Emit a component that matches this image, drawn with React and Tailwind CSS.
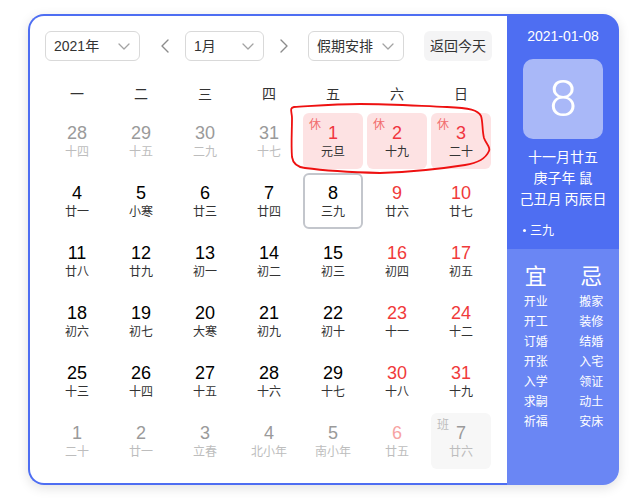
import React from "react";

const FONT = { fontFamily: '"Liberation Sans", Arial, "Noto Sans CJK SC", sans-serif' };

const weeks = ["一", "二", "三", "四", "五", "六", "日"];

// t: o = other month, h = holiday, s = selected, w = work (班)
const days = [
  [28, "十四", "o"], [29, "十五", "o"], [30, "二九", "o"], [31, "十七", "o"], [1, "元旦", "h"], [2, "十九", "h"], [3, "二十", "h"],
  [4, "廿一"], [5, "小寒"], [6, "廿三"], [7, "廿四"], [8, "三九", "s"], [9, "廿六"], [10, "廿七"],
  [11, "廿八"], [12, "廿九"], [13, "初一"], [14, "初二"], [15, "初三"], [16, "初四"], [17, "初五"],
  [18, "初六"], [19, "初七"], [20, "大寒"], [21, "初九"], [22, "初十"], [23, "十一"], [24, "十二"],
  [25, "十三"], [26, "十四"], [27, "十五"], [28, "十六"], [29, "十七"], [30, "十八"], [31, "十九"],
  [1, "二十", "o"], [2, "廿一", "o"], [3, "立春", "o"], [4, "北小年", "o"], [5, "南小年", "o"], [6, "廿五", "o"], [7, "廿六", "w"],
];

const yi = ["开业", "开工", "订婚", "开张", "入学", "求嗣", "祈福"];
const ji = ["搬家", "装修", "结婚", "入宅", "领证", "动土", "安床"];

function Chevron() {
  return (
    <svg width="12" height="7" viewBox="0 0 12 7" fill="none">
      <path d="M1 1l5 5 5-5" stroke="#a3a3a3" strokeWidth="1.3" strokeLinecap="round" strokeLinejoin="round" />
    </svg>
  );
}

function Select({ label, w }) {
  return (
    <div className={`${w} h-[30px] flex items-center justify-between pl-[8px] pr-[9px] border border-[#d9d9d9] rounded-[6px] text-[14px] text-[#333]`}>
      <span>{label}</span>
      <Chevron />
    </div>
  );
}

function Cell({ d, idx }) {
  const [n, lunar, t] = d;
  const col = idx % 7;
  const weekend = col >= 5;
  let box = "";
  let numC = "text-black";
  let lunC = "text-[#333]";
  let tag = null;
  if (t === "o") {
    numC = weekend ? "text-[#f7a3a3]" : "text-[#9a9a9a]";
    lunC = "text-[#bdbdbd]";
  } else if (t === "h") {
    box = "bg-[#fde2e3]";
    numC = "text-[#f0353f]";
    tag = <span className="absolute left-[6px] top-[4px] text-[12px] leading-[16px] text-[#f26d6d]">休</span>;
  } else if (t === "w") {
    box = "bg-[#f7f7f7]";
    numC = "text-[#9a9a9a]";
    lunC = "text-[#bdbdbd]";
    tag = <span className="absolute left-[6px] top-[4px] text-[12px] leading-[16px] text-[#bdbdbd]">班</span>;
  } else if (t === "s") {
    box = "border-2 border-[#c3c6cc]";
  } else if (weekend) {
    numC = "text-[#f03a3a]";
  }
  return (
    <div className={`relative h-[56px] rounded-[6px] flex flex-col items-center ${box} ${t === "s" ? "pt-[8px]" : "pt-[10px]"}`}>
      {tag}
      <span className={`text-[18px] leading-[20px] ${numC}`}>{n}</span>
      <span className={`mt-[1px] text-[12px] leading-[16px] ${lunC}`}>{lunar}</span>
    </div>
  );
}

export default function App() {
  return (
    <div className="relative w-[630px] h-[498px] bg-white" style={FONT}>
      <div className="pl-[28px] pt-[14px]">
        <div className="flex w-[591px] h-[471px] rounded-[16px] shadow-[0_3px_12px_rgba(0,0,0,0.12)]">
          {/* Left calendar */}
          <div className="w-[479px] h-full border-2 border-r-0 border-[#4e6ef2] rounded-l-[16px] bg-white pt-[15px] pl-[15px]">
            <div className="flex items-center">
              <Select label="2021年" w="w-[95px]" />
              <svg className="ml-[21px] mr-[16px]" width="8" height="14" viewBox="0 0 8 14" fill="none">
                <path d="M7 1L1 7l6 6" stroke="#8c8c8c" strokeWidth="1.4" strokeLinecap="round" strokeLinejoin="round" />
              </svg>
              <Select label="1月" w="w-[79px]" />
              <svg className="ml-[16px] mr-[20px]" width="8" height="14" viewBox="0 0 8 14" fill="none">
                <path d="M1 1l6 6-6 6" stroke="#8c8c8c" strokeWidth="1.4" strokeLinecap="round" strokeLinejoin="round" />
              </svg>
              <Select label="假期安排" w="w-[96px]" />
              <div className="ml-[20px] w-[68px] h-[30px] flex items-center justify-center rounded-[6px] bg-[#f4f4f5] text-[14px] text-[#333]">
                返回今天
              </div>
            </div>
            <div className="ml-[2px] mt-[23px] grid grid-cols-[repeat(7,60px)] gap-x-[4px] h-[20px]">
              {weeks.map((w) => (
                <div key={w} className="text-center text-[14px] leading-[20px] text-[#333]">{w}</div>
              ))}
            </div>
            <div className="ml-[2px] mt-[9px] grid grid-cols-[repeat(7,60px)] gap-[4px]">
              {days.map((d, i) => (
                <Cell key={i} d={d} idx={i} />
              ))}
            </div>
          </div>
          {/* Right panel */}
          <div className="w-[112px] h-full rounded-r-[16px] overflow-hidden flex flex-col text-white">
            <div className="h-[235px] bg-[#4e6ef2] flex flex-col items-center pt-[14px]">
              <div className="text-[14px] leading-[16px]">2021-01-08</div>
              <div className="mt-[15px] w-[80px] h-[80px] rounded-[10px] bg-[#a9b8f8] flex items-center justify-center">
                <span className="text-[50px] leading-none font-light" style={{ fontFamily: "Roboto, sans-serif" }}>8</span>
              </div>
              <div className="mt-[7px] text-[14px] leading-[21px] text-center" style={{ fontFamily: '"Noto Sans CJK SC", sans-serif' }}>
                <div>十一月廿五</div>
                <div>庚子年 鼠</div>
                <div>己丑月 丙辰日</div>
              </div>
              <div className="self-start pl-[16px] mt-[12px] text-[12px] leading-[18px] flex items-center" style={{ fontFamily: '"Noto Sans CJK SC", sans-serif' }}>
                <span className="w-[3px] h-[3px] rounded-full bg-white mr-[4px]"></span>
                三九
              </div>
            </div>
            <div className="flex-1 bg-[#6a86f4] grid grid-cols-2 content-start pt-[13px] pl-[1px]" style={{ fontFamily: '"Noto Sans CJK SC", sans-serif' }}>
              <div className="flex flex-col items-center">
                <div className="h-[29px] flex items-start text-[22px] leading-[24px]">宜</div>
                {yi.map((t) => (
                  <div key={t} className="text-[12px] leading-[20px]">{t}</div>
                ))}
              </div>
              <div className="flex flex-col items-center">
                <div className="h-[29px] flex items-start text-[22px] leading-[24px]">忌</div>
                {ji.map((t) => (
                  <div key={t} className="text-[12px] leading-[20px]">{t}</div>
                ))}
              </div>
            </div>
          </div>
        </div>
      </div>
      {/* Hand-drawn red annotation */}
      <svg className="absolute left-0 top-0 pointer-events-none" width="630" height="498" viewBox="0 0 630 498" fill="none">
        <path
          d="M294 107 C 289 108, 292 112, 292 118 C 292 130, 291 145, 292 157 C 293 164, 297 167, 305 168 C 320 170, 345 172, 380 173 C 410 172, 440 169, 465 165 C 478 163, 486 158, 489 151 C 491 147, 486 144, 484 138 C 482 130, 483 122, 481 116 C 478 110, 470 108, 447 107 C 420 106, 390 104, 360 104 C 335 104, 312 106, 294 107 Z"
          stroke="#ee1111"
          strokeWidth="1.8"
          strokeLinejoin="round"
        />
      </svg>
    </div>
  );
}
